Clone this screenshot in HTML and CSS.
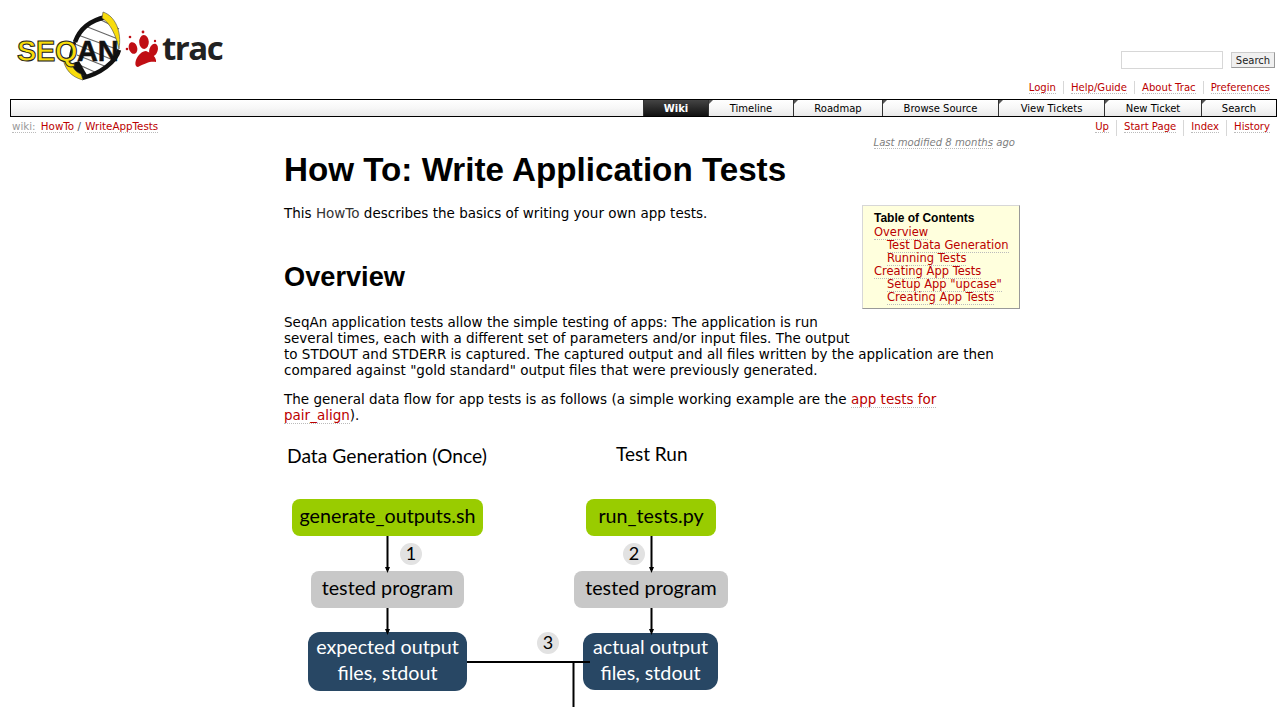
FILE: index.html
```html
<!DOCTYPE html>
<html>
<head>
    <title>HowTo/WriteAppTests – SeqAn</title>
    <meta name="viewport" content="width=device-width, initial-scale=1.0">
    <link rel="stylesheet" href="styles.css">
</head>
<body>
    <header class="banner">
        <a class="logo" href="#">
            <svg width="212" height="72" viewBox="0 0 212 72">
                <!-- dna helix -->
                <path d="M60 33 C65 19 77 11 91 8 L104 21 L104 41 C101 53 85 65 67 69 L55 57 Z" fill="#fff"/>
                <path d="M70 17 L103 30 M63 26 L104 41 M84 10 L104 20 M60 35 L98 51 M92 58 L62 46 M82 64 L60 54" stroke="#666" stroke-width="1.1" fill="none"/>
                <path d="M60 33 C65 19 77 11 91 8" fill="none" stroke="#111" stroke-width="4.500"/>
                <path d="M104 41 C101 53 85 65 67 69" fill="none" stroke="#111" stroke-width="4.500"/>
                <path d="M60 33 C57 38 56 44 55 50" fill="none" stroke="#111" stroke-width="3"/>
                <path d="M55 55 L62 68 L72 66 L64 52 Z" fill="#111"/>
                <path d="M88 3 C100 7 107 22 104 40 C101 26 95 14 87 9 Z" fill="#f8dc0c" stroke="#444" stroke-width=".6"/>
                <path d="M48 50 C50 60 56 68 68 71 L66 65 C60 63 56 57 55 49 Z" fill="#f8dc0c" stroke="#444" stroke-width=".6"/>
                <text class="logo-seq" x="2" y="52">SEQ</text>
                <text class="logo-an" x="62" y="52">AN</text>
                <!-- paw -->
                <g fill="#c00e14">
                    <path d="M131 42 C137 44 142 49 141 53 C135 52 131 54 123 58 C120 58 120 54 121 51 C123 46 127 42 131 42 Z"/>
                    <ellipse cx="118" cy="39" rx="4.200" ry="6" transform="rotate(-18 118 39)"/>
                    <ellipse cx="129" cy="33" rx="4.800" ry="7" transform="rotate(-2 129 33)"/>
                    <ellipse cx="138.500" cy="41" rx="4.200" ry="6.500" transform="rotate(18 138.500 41)"/>
                    <circle cx="115" cy="28" r="1.300"/>
                    <circle cx="128" cy="23" r="1.400"/>
                    <circle cx="140" cy="32" r="1.200"/>
                    <circle cx="112" cy="40" r="1.300"/>
                </g>
                <text class="logo-trac" x="147" y="51">trac</text>
            </svg>
        </a>
        <div class="header-right">
            <form class="search">
                <input class="search-input" type="text">
                <button class="search-btn" type="button">Search</button>
            </form>
            <ul class="metanav">
                <li><a href="#">Login</a></li>
                <li><a href="#">Help/Guide</a></li>
                <li><a href="#">About Trac</a></li>
                <li><a href="#">Preferences</a></li>
            </ul>
        </div>
    </header>
    <nav class="mainnav">
        <a class="tab active" href="#">Wiki</a>
        <a class="tab tab-timeline" href="#">Timeline</a>
        <a class="tab tab-roadmap" href="#">Roadmap</a>
        <a class="tab tab-browse" href="#">Browse Source</a>
        <a class="tab tab-view" href="#">View Tickets</a>
        <a class="tab tab-new" href="#">New Ticket</a>
        <a class="tab tab-search" href="#">Search</a>
    </nav>
    <div class="ctxtbar">
        <div class="path"><span class="wiki-label">wiki:</span> <a href="#">HowTo</a> <span class="slash">/</span> <a href="#">WriteAppTests</a></div>
        <ul class="ctxtnav">
            <li><a href="#">Up</a></li>
            <li><a href="#">Start Page</a></li>
            <li><a href="#">Index</a></li>
            <li><a href="#">History</a></li>
        </ul>
    </div>
    <main class="content">
        <p class="lastmod"><span class="dotted">Last modified</span> <span class="dotted">8 months</span> ago</p>
        <h1>How To: Write Application Tests</h1>
        <aside class="toc">
            <h4>Table of Contents</h4>
            <ul>
                <li><a href="#">Overview</a></li>
                <li class="sub"><a href="#">Test Data Generation</a></li>
                <li class="sub"><a href="#">Running Tests</a></li>
                <li><a href="#">Creating App Tests</a></li>
                <li class="sub"><a href="#">Setup App "upcase"</a></li>
                <li class="sub"><a href="#">Creating App Tests</a></li>
            </ul>
        </aside>
        <p class="intro">This <span class="missing">HowTo</span> describes the basics of writing your own app tests.</p>
        <h2>Overview</h2>
        <p class="text">SeqAn application tests allow the simple testing of apps: The application is run several times, each with a different set of parameters and/or input files. The output to STDOUT and STDERR is captured. The captured output and all files written by the application are then compared against "gold standard" output files that were previously generated.</p>
        <p class="text">The general data flow for app tests is as follows (a simple working example are the <a href="#">app tests for</a> <a href="#">pair_align</a>).</p>
        <div class="diagram">
            <div class="label label-gen">Data Generation (Once)</div>
            <div class="label label-run">Test Run</div>
            <div class="box green box-gen">generate_outputs.sh</div>
            <div class="box green box-run">run_tests.py</div>
            <div class="box grey box-p1">tested program</div>
            <div class="box grey box-p2">tested program</div>
            <div class="box navy box-exp">expected output<br>files, stdout</div>
            <div class="box navy box-act">actual output<br>files, stdout</div>
            <div class="num num-1">1</div>
            <div class="num num-2">2</div>
            <div class="num num-3">3</div>
            <svg class="wires" width="460" height="267" viewBox="0 0 460 267">
                <g stroke="#000" stroke-width="2" fill="none">
                    <path d="M107.500 96V130M107.500 168V192M371.500 96V130M371.500 168V192"/>
                    <path d="M187 222H310M293.500 222V267"/>
                </g>
                <g fill="#000">
                    <path d="M105 127h5l-2.500 6zM105 189h5l-2.500 6zM369 127h5l-2.500 6zM369 189h5l-2.500 6z"/>
                </g>
            </svg>
        </div>
    </main>
</body>
</html>
```

FILE: styles.css
```css
html {
    overflow: hidden;
}
body {
    background: #fff;
    color: #000;
    font-family: "DejaVu Sans", Verdana, sans-serif;
    font-size: 13px;
    margin: 0;
    height: 707px;
    overflow: hidden;
}
a {
    color: #b00;
    text-decoration: none;
    border-bottom: 1px dotted #bbb;
}
ul {
    list-style: none;
    margin: 0;
    padding: 0;
}

/* banner */
.banner {
    display: flex;
    justify-content: space-between;
    height: 99px;
}
.logo {
    border: 0;
    display: block;
    margin: 9px 0 0 15px;
    height: 72px;
}
.logo-seq {
    font: bold 29px "Liberation Sans", Arial, sans-serif;
    fill: #f8dc0c;
    stroke: #222;
    stroke-width: 1px;
    letter-spacing: -.3px;
}
.logo-an {
    font: bold 29px "Liberation Sans", Arial, sans-serif;
    fill: #111;
    stroke: #111;
    stroke-width: .5px;
    letter-spacing: -.3px;
}
.logo-trac {
    font: bold 33px "Open Sans", sans-serif;
    fill: #222;
    letter-spacing: -1.5px;
}
.header-right {
    display: flex;
    flex-direction: column;
    align-items: flex-end;
    padding: 51px 12px 0 0;
}
.search {
    display: flex;
    align-items: center;
    gap: 8px;
    margin: 0;
    height: 18px;
}
.search-input {
    box-sizing: border-box;
    width: 102px;
    height: 18px;
    border: 1px solid #d7d7d7;
    background: #fff;
    padding: 0;
}
.search-btn {
    box-sizing: border-box;
    width: 44px;
    height: 16px;
    padding: 0;
    font: 10px "DejaVu Sans", Verdana, sans-serif;
    color: #222;
    background: #f0f0f0;
    border: 1px solid #ccc;
    border-bottom-color: #999;
    border-right-color: #999;
}
.metanav {
    display: flex;
    margin: 12px 5px 0 0;
    font-size: 10.1px;
    line-height: 13px;
}
.metanav li, .ctxtnav li {
    padding: 0 7px;
    border-right: 1px solid #d7d7d7;
}
.metanav li:last-child, .ctxtnav li:last-child {
    border-right: 0;
    padding-right: 0;
}

/* main nav */
.mainnav {
    display: flex;
    justify-content: flex-end;
    box-sizing: border-box;
    height: 18px;
    margin: 0 10px;
    border: 1px solid #000;
    background: linear-gradient(#fff, #f7f7f7 50%, #e9e9e9);
    font-size: 10px;
}
.tab {
    display: block;
    box-sizing: border-box;
    position: relative;
    text-align: center;
    line-height: 17px;
    color: #000;
    border: 0;
    border-left: 1px solid #333;
    background: linear-gradient(#fff, #f7f7f7 50%, #e9e9e9);
}
.tab::before {
    content: "";
    position: absolute;
    left: 0;
    top: 0;
    border-top: 4px solid #555;
    border-right: 4px solid transparent;
}
.tab.active {
    width: 65px;
    color: #fff;
    font-weight: bold;
    background: linear-gradient(#444, #111);
}
.tab.active::before {
    display: none;
}
.tab-timeline { width: 85px; }
.tab-roadmap { width: 89px; }
.tab-browse { width: 116px; }
.tab-view { width: 106px; }
.tab-new { width: 97px; }
.tab-search { width: 75px; }

/* context bar */
.ctxtbar {
    display: flex;
    justify-content: space-between;
    height: 19px;
    padding: 3px 17px 0 12px;
    box-sizing: border-box;
    font-size: 10.1px;
    line-height: 13px;
}
.path {
    font-size: 10.3px;
}
.ctxtnav {
    display: flex;
}
.wiki-label {
    color: #999;
    border-bottom: 1px dotted #bbb;
    margin-right: 2px;
}
.slash {
    color: #555;
    margin-right: 1px;
}

/* content */
.content {
    width: 736px;
    margin-left: 284px;
}
.lastmod {
    margin: 0;
    padding-right: 5px;
    text-align: right;
    font-size: 10.1px;
    font-style: italic;
    color: #808080;
    line-height: 13px;
}
.dotted {
    border-bottom: 1px dotted #bbb;
}
h1, h2 {
    font-family: "Liberation Sans", Arial, sans-serif;
    font-weight: bold;
    margin: 0;
}
h1 {
    font-size: 33.2px;
    line-height: 37px;
    margin-top: 2px;
}
h2 {
    font-size: 27.2px;
    line-height: 31px;
    margin-top: 40px;
}
.toc {
    float: right;
    box-sizing: border-box;
    width: 158px;
    height: 104px;
    margin: 17px 0 30px 10px;
    padding: 5px 0 0 11px;
    background: #ffffdd;
    border: 1px solid #d7d7d7;
    border-right-color: #999;
    border-bottom-color: #999;
    font-size: 11.5px;
    line-height: 13px;
}
.toc h4 {
    font: bold 12px/15px "Liberation Sans", Arial, sans-serif;
    margin: 0;
}
.toc .sub {
    padding-left: 13px;
}
.intro, .text {
    margin: 0;
    font-size: 13.5px;
    line-height: 16px;
    width: 712px;
}
.intro {
    margin-top: 17px;
}
.text {
    margin-top: 13px;
}
.missing {
    color: #333;
}
h2 + .text {
    margin-top: 22px;
}

/* flow diagram */
.diagram {
    position: relative;
    width: 460px;
    height: 267px;
    margin: 17px 0 0 -4px;
    font-family: Lato, "Open Sans", sans-serif;
    font-size: 19.7px;
}
.wires {
    position: absolute;
    left: 0;
    top: 0;
}
.label {
    position: absolute;
    white-space: nowrap;
    font-size: 19.3px;
}
.label-gen { left: 7px; top: 4px; }
.label-run { left: 336px; top: 2px; font-size: 19px; }
.box {
    position: absolute;
    display: flex;
    align-items: center;
    justify-content: center;
    box-sizing: border-box;
    padding-bottom: 3px;
    text-align: center;
    line-height: 26px;
    white-space: nowrap;
}
.green { background: #99cc00; color: #000; border-radius: 8px; }
.grey { background: #c8c8c8; color: #000; border-radius: 8px; }
.navy { background: #284764; color: #fff; border-radius: 12px; }
.box-gen { left: 12px; top: 59px; width: 191px; height: 37px; }
.box-run { left: 306px; top: 59px; width: 130px; height: 37px; }
.box-p1 { left: 31px; top: 131px; width: 153px; height: 37px; }
.box-p2 { left: 294px; top: 131px; width: 154px; height: 37px; }
.box-exp { left: 28px; top: 192px; width: 159px; height: 59px; }
.box-act { left: 303px; top: 193px; width: 135px; height: 57px; }
.num {
    position: absolute;
    width: 22px;
    height: 22px;
    border-radius: 50%;
    background: #e2e2e2;
    text-align: center;
    line-height: 21px;
    font-size: 18px;
}
.num-1 { left: 120px; top: 103px; }
.num-2 { left: 343px; top: 103px; }
.num-3 { left: 257px; top: 192px; }
```
